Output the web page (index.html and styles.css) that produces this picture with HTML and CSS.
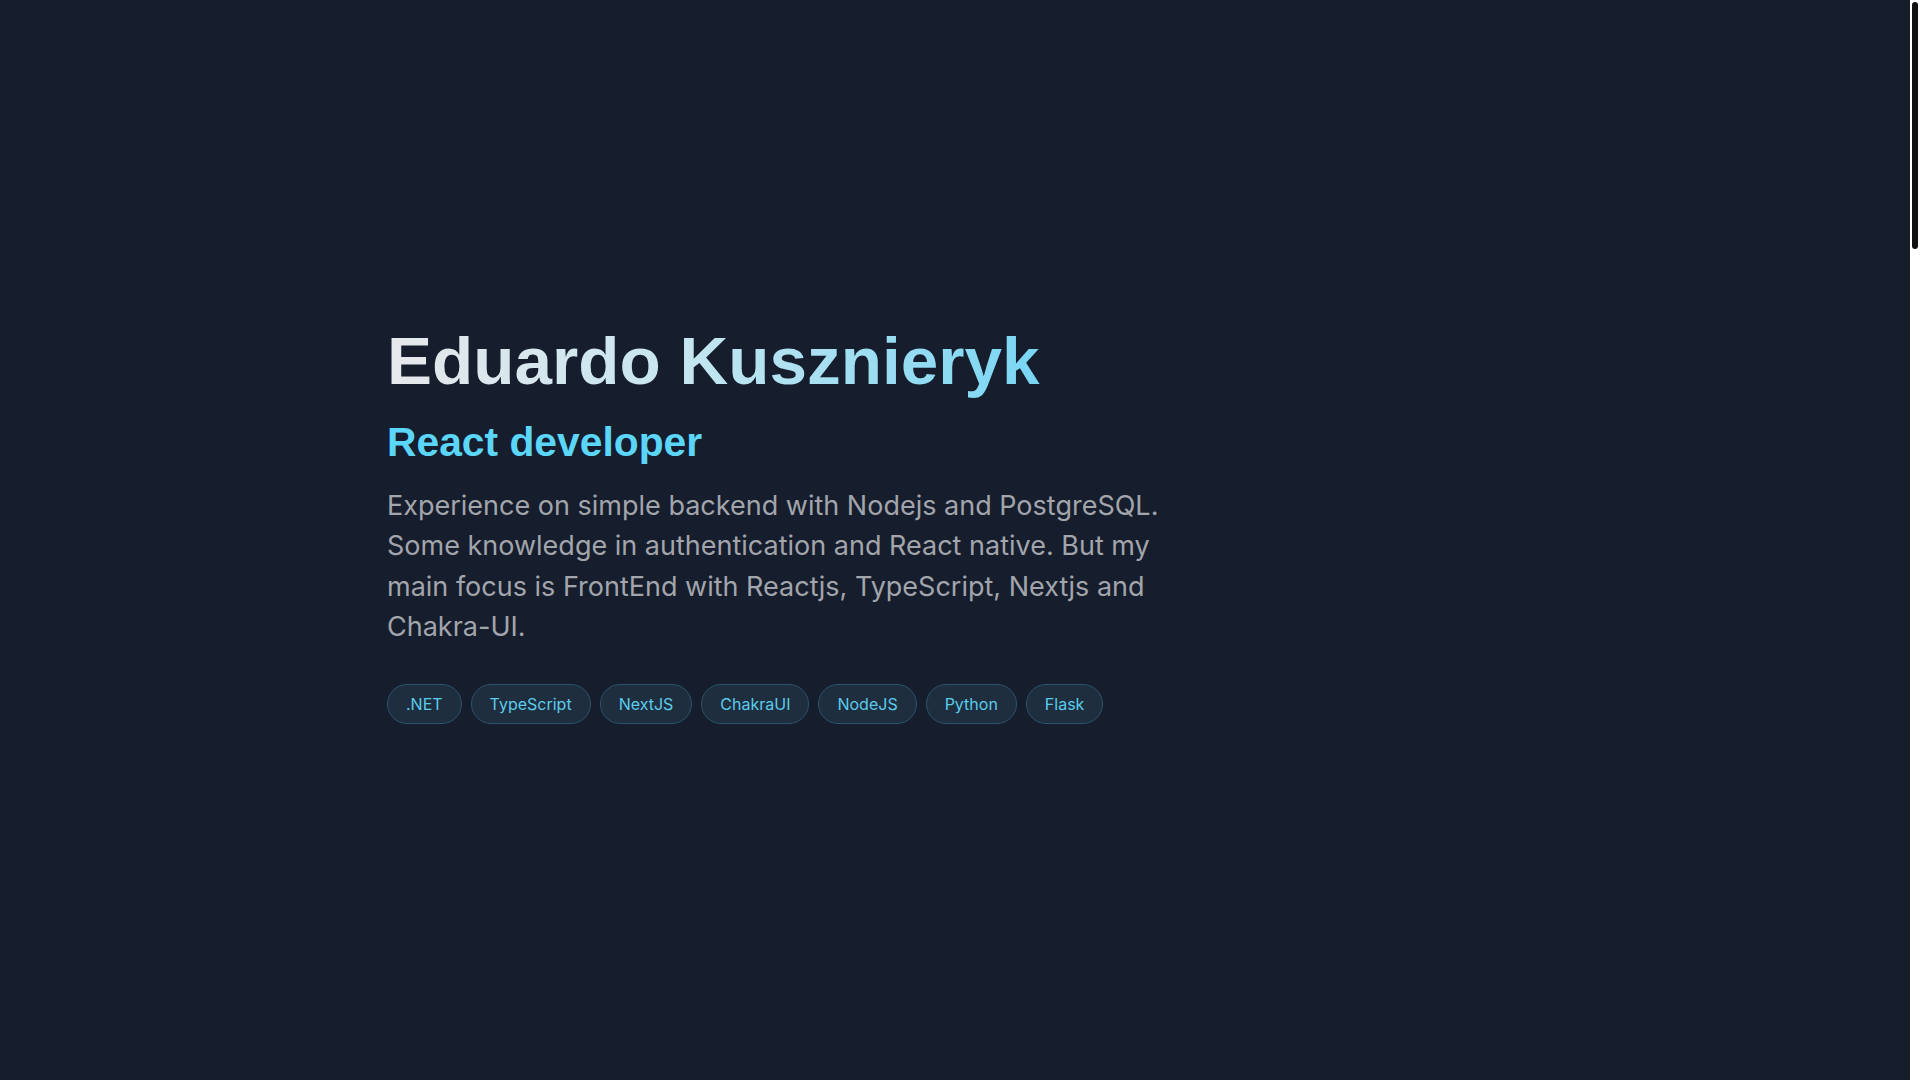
FILE: index.html
```html
<!DOCTYPE html>
<html lang="en">
<head>
    <meta charset="UTF-8">
    <meta name="viewport" content="width=device-width, initial-scale=1.0">
    <title>Eduardo Kusznieryk</title>
    <link rel="stylesheet" href="styles.css">
</head>
<body>

<main class="page">
    <section class="hero">
        <div class="container">
            <h1 class="name">Eduardo Kusznieryk</h1>
            <h2 class="role">React developer</h2>
            <p class="about">
                Experience on simple backend with Nodejs and PostgreSQL. Some knowledge in authentication and React native. But my main focus is FrontEnd with Reactjs, TypeScript, Nextjs and Chakra-UI.
            </p>
            <ul class="skills">
                <li class="skill">.NET</li>
                <li class="skill">TypeScript</li>
                <li class="skill">NextJS</li>
                <li class="skill">ChakraUI</li>
                <li class="skill">NodeJS</li>
                <li class="skill">Python</li>
                <li class="skill">Flask</li>
            </ul>
        </div>
    </section>
</main>

<!-- light scroll rail on the right edge -->
<div class="scroll-rail">
    <div class="scroll-thumb"></div>
</div>

</body>
</html>
```

FILE: styles.css
```css
body {
    margin: 0;
    padding: 0;
    background-color: #161d2d;
    font-family: Inter, "Noto Sans", sans-serif;
}
.page {
    min-height: 4700px;
    padding-right: 10px;
}
.hero {
    padding-top: 320px;
}
.container {
    max-width: 1136px;
    margin: 0 auto;
}
.name {
    display: inline-block;
    margin: 0;
    font-family: "Liberation Sans", Arial, sans-serif;
    font-size: 67.5px;
    font-weight: 700;
    line-height: 1.2;
    background: linear-gradient(to right, #e6e8eb 0%, #c6e6f0 45%, #79d6f4 100%);
    -webkit-background-clip: text;
    background-clip: text;
    color: transparent;
}
.role {
    margin: 17px 0 0;
    font-family: "Liberation Sans", Arial, sans-serif;
    font-size: 40.8px;
    font-weight: 700;
    line-height: 1.2;
    color: #5cd6f8;
}
.about {
    max-width: 800px;
    margin: 19px 0 0;
    font-size: 27px;
    line-height: 1.5;
    color: #a2a5ab;
}
.skills {
    display: flex;
    flex-wrap: wrap;
    gap: 9px;
    list-style: none;
    margin: 36px 0 0;
    padding: 0;
}
.skill {
    display: inline-flex;
    align-items: center;
    box-sizing: border-box;
    height: 40px;
    padding: 0 18px;
    font-size: 16px;
    color: #5ccbea;
    background-color: #1e2e3f;
    border: 1px solid #2b546b;
    border-radius: 999px;
}
.scroll-rail {
    position: fixed;
    top: 0;
    right: 0;
    width: 10px;
    height: 100vh;
    background-color: #fff;
}
.scroll-thumb {
    margin: 2px 2px 0;
    height: 247px;
    background-color: #111;
    border-radius: 3px;
}
```
